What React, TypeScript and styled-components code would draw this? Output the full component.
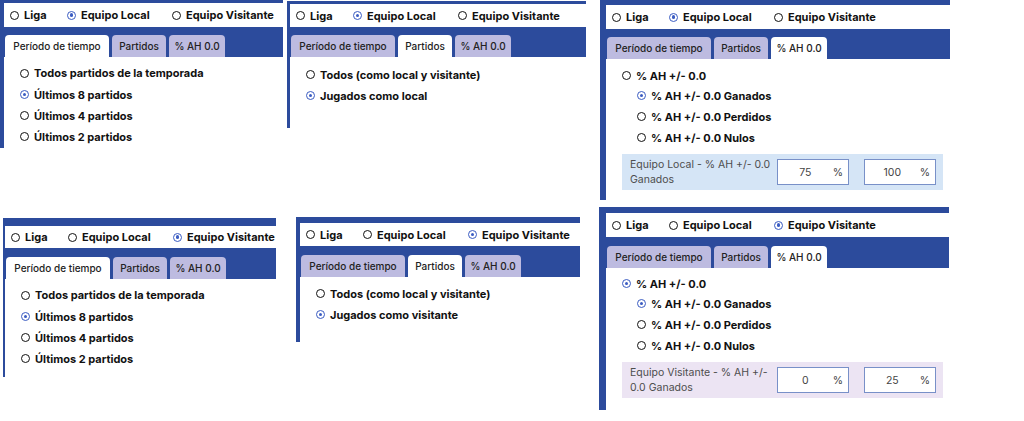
import React from 'react';
import styled, { createGlobalStyle } from 'styled-components';

const BLUE = '#2c4b9c';
const RADIO_BLUE = '#3b5cc2';

const GlobalStyle = createGlobalStyle`
  html, body { margin: 0; padding: 0; background: #ffffff; }
  body { font-family: Inter, "Open Sans", sans-serif; color: #111; }
`;

const Canvas = styled.div`
  width: 1024px;
  height: 421px;
  overflow: hidden;
  display: flex;
  flex-direction: column;
`;

const PanelRow = styled.div<{ $h: number }>`
  display: flex;
  align-items: flex-start;
  height: ${p => p.$h}px;
  flex: none;
`;

const Frame = styled.section<{ $ml: number; $mt: number; $w: number; $h: number; $bl: number; $bt: number }>`
  flex: none;
  box-sizing: border-box;
  margin-left: ${p => p.$ml}px;
  margin-top: ${p => p.$mt}px;
  width: ${p => p.$w}px;
  height: ${p => p.$h}px;
  border-left: ${p => p.$bl}px solid ${BLUE};
  border-top: ${p => p.$bt}px solid ${BLUE};
  background: #fff;
  display: flex;
  flex-direction: column;
`;

const Header = styled.div<{ $h: number }>`
  flex: none;
  height: ${p => p.$h}px;
  display: flex;
  align-items: center;
  padding-left: 6px;
  background: #fff;
`;

const HeaderOption = styled.div<{ $w?: number }>`
  display: flex;
  align-items: center;
  gap: 5px;
  width: ${p => (p.$w ? `${p.$w}px` : 'auto')};
  flex: none;
  font-size: 11px;
  font-weight: 700;
  color: #111;
  white-space: nowrap;
`;

const TabBand = styled.div<{ $h: number }>`
  flex: none;
  height: ${p => p.$h}px;
  background: ${BLUE};
  display: flex;
  align-items: flex-end;
  gap: 3px;
  padding-left: 1px;
`;

const Tab = styled.div<{ $w: number; $active: boolean }>`
  width: ${p => p.$w}px;
  height: 22px;
  border-radius: 4px 4px 0 0;
  background: ${p => (p.$active ? '#ffffff' : '#bdbbe0')};
  display: flex;
  align-items: center;
  justify-content: center;
  font-size: 10px;
  font-weight: 500;
  color: #222;
  white-space: nowrap;
`;

const Body = styled.div<{ $pt: number }>`
  flex: 1;
  padding: ${p => p.$pt}px 0 0 16px;
  display: flex;
  flex-direction: column;
  align-items: flex-start;
`;

const Option = styled.div<{ $indent?: number; $h?: number }>`
  height: ${p => p.$h ?? 21}px;
  display: flex;
  align-items: center;
  gap: 5px;
  margin-left: ${p => p.$indent ?? 0}px;
  font-size: 11px;
  font-weight: 700;
  color: #111;
  white-space: nowrap;
`;

const Dot = styled.span<{ $on: boolean }>`
  position: relative;
  flex: none;
  width: 9px;
  height: 9px;
  box-sizing: border-box;
  border-radius: 50%;
  border: ${p => (p.$on ? '1.2px' : '1.6px')} solid ${p => (p.$on ? RADIO_BLUE : '#111')};
  &::after {
    content: '';
    display: ${p => (p.$on ? 'block' : 'none')};
    position: absolute;
    inset: 1.6px;
    border-radius: 50%;
    background: ${RADIO_BLUE};
  }
`;

const Filter = styled.div<{ $bg: string }>`
  margin-top: 6px;
  width: 321px;
  height: 36px;
  box-sizing: border-box;
  background: ${p => p.$bg};
  display: flex;
  align-items: center;
  padding: 0 7px 0 8px;
`;

const FilterLabel = styled.div`
  flex: 1;
  font-size: 10.5px;
  line-height: 15px;
  font-weight: 400;
  color: #4d4d4d;
`;

const ValueBox = styled.div<{ $gap: number }>`
  flex: none;
  width: 72px;
  height: 26px;
  margin-left: ${p => p.$gap}px;
  box-sizing: border-box;
  border: 1px solid #7890c8;
  background: #fff;
  display: flex;
  align-items: center;
  padding-right: 5px;
  font-size: 10.5px;
  color: #444;
`;

const ValueText = styled.span`
  flex: 1;
  text-align: center;
`;

type Team = 'local' | 'visitante';

interface PanelSpec {
  ml: number; mt: number; w: number; h: number; bl: number; bt: number;
  rowH: number; bandH: number; pt: number;
  team: Team; tab: 0 | 1 | 2;
  ahTop?: boolean; values?: [string, string];
}

const Radio = ({ on }: { on: boolean }) => <Dot $on={on} />;

const TABS = [
  { label: 'Período de tiempo', w: 104 },
  { label: 'Partidos', w: 54 },
  { label: '% AH 0.0', w: 56 },
];

const Panel = ({ s }: { s: PanelSpec }) => {
  const local = s.team === 'local';
  return (
    <Frame $ml={s.ml} $mt={s.mt} $w={s.w} $h={s.h} $bl={s.bl} $bt={s.bt}>
      <Header $h={s.rowH}>
        <HeaderOption $w={57}><Radio on={false} />Liga</HeaderOption>
        <HeaderOption $w={105}><Radio on={local} />Equipo Local</HeaderOption>
        <HeaderOption><Radio on={!local} />Equipo Visitante</HeaderOption>
      </Header>
      <TabBand $h={s.bandH}>
        {TABS.map((t, i) => (
          <Tab key={t.label} $w={t.w} $active={i === s.tab}>{t.label}</Tab>
        ))}
      </TabBand>
      <Body $pt={s.pt}>
        {s.tab === 0 && (
          <>
            <Option $h={22}><Radio on={false} />Todos partidos de la temporada</Option>
            <Option><Radio on />Últimos 8 partidos</Option>
            <Option><Radio on={false} />Últimos 4 partidos</Option>
            <Option><Radio on={false} />Últimos 2 partidos</Option>
          </>
        )}
        {s.tab === 1 && (
          <>
            <Option><Radio on={false} />Todos (como local y visitante)</Option>
            <Option><Radio on />{local ? 'Jugados como local' : 'Jugados como visitante'}</Option>
          </>
        )}
        {s.tab === 2 && (
          <>
            <Option $h={19}><Radio on={!!s.ahTop} />% AH +/- 0.0</Option>
            <Option $indent={15}><Radio on />% AH +/- 0.0 Ganados</Option>
            <Option $indent={15}><Radio on={false} />% AH +/- 0.0 Perdidos</Option>
            <Option $indent={15}><Radio on={false} />% AH +/- 0.0 Nulos</Option>
            <Filter $bg={local ? '#d5e5f6' : '#ece4f3'}>
              <FilterLabel>
                {local ? (<>Equipo Local - % AH +/- 0.0<br />Ganados</>) : (<>Equipo Visitante - % AH +/-<br />0.0 Ganados</>)}
              </FilterLabel>
              <ValueBox $gap={0}><ValueText>{s.values?.[0]}</ValueText>%</ValueBox>
              <ValueBox $gap={15}><ValueText>{s.values?.[1]}</ValueText>%</ValueBox>
            </Filter>
          </>
        )}
      </Body>
    </Frame>
  );
};

const TOP: PanelSpec[] = [
  { ml: 0, mt: 0, w: 283, h: 148, bl: 4, bt: 3, rowH: 24, bandH: 30, pt: 5, team: 'local', tab: 0 },
  { ml: 4, mt: 1, w: 299, h: 127, bl: 3, bt: 3, rowH: 23, bandH: 30, pt: 7, team: 'local', tab: 1 },
  { ml: 14, mt: 0, w: 350, h: 200, bl: 6, bt: 5, rowH: 24, bandH: 30, pt: 7, team: 'local', tab: 2, ahTop: false, values: ['75', '100'] },
];

const BOTTOM: PanelSpec[] = [
  { ml: 3, mt: 18, w: 273, h: 159, bl: 2, bt: 8, rowH: 22, bandH: 31, pt: 5, team: 'visitante', tab: 0 },
  { ml: 20, mt: 17, w: 284, h: 125, bl: 4, bt: 6, rowH: 23, bandH: 31, pt: 6, team: 'visitante', tab: 1 },
  { ml: 19, mt: 7, w: 350, h: 203, bl: 7, bt: 6, rowH: 24, bandH: 31, pt: 6, team: 'visitante', tab: 2, ahTop: true, values: ['0', '25'] },
];

export default function App() {
  return (
    <>
      <GlobalStyle />
      <Canvas>
        <PanelRow $h={200}>
          {TOP.map((s, i) => <Panel key={i} s={s} />)}
        </PanelRow>
        <PanelRow $h={221}>
          {BOTTOM.map((s, i) => <Panel key={i} s={s} />)}
        </PanelRow>
      </Canvas>
    </>
  );
}
